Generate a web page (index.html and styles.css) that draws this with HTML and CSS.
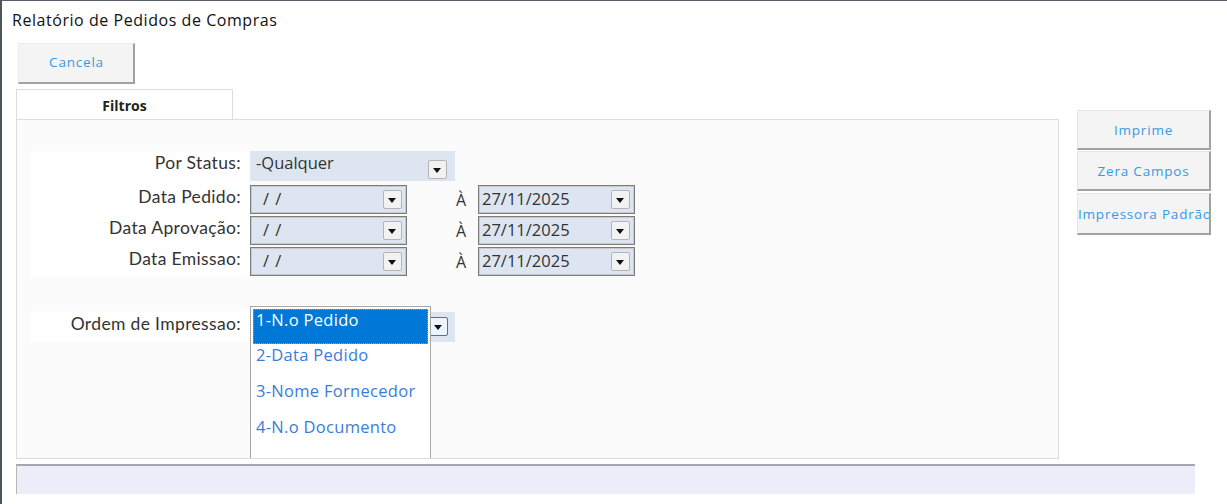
FILE: index.html
```html
<!DOCTYPE html>
<html lang="pt">
  <head>
    <meta charset="UTF-8" />
    <title>Relatório de Pedidos de Compras</title>
    <link rel="stylesheet" href="styles.css">
  </head>
  <body>
    <div class="window">
      <div class="title">Relatório de Pedidos de Compras</div>

      <div class="toolbar">
        <button class="btn btn-cancel">Cancela</button>
      </div>

      <div class="main">
        <div class="left">
          <div class="tabs">
            <div class="tab">Filtros</div>
          </div>

          <div class="panel">
            <div class="filters">
              <div class="row row-status">
                <div class="label">Por Status:</div>
                <div class="combo combo-wide">
                  <span class="combo-text">-Qualquer</span>
                  <span class="drop"></span>
                </div>
              </div>

              <div class="row">
                <div class="label">Data Pedido:</div>
                <div class="combo combo-date">
                  <span class="combo-text slashes">/ /</span>
                  <span class="drop"></span>
                </div>
                <div class="until">À</div>
                <div class="combo combo-date">
                  <span class="combo-text">27/11/2025</span>
                  <span class="drop"></span>
                </div>
              </div>

              <div class="row">
                <div class="label">Data Aprovação:</div>
                <div class="combo combo-date">
                  <span class="combo-text slashes">/ /</span>
                  <span class="drop"></span>
                </div>
                <div class="until">À</div>
                <div class="combo combo-date">
                  <span class="combo-text">27/11/2025</span>
                  <span class="drop"></span>
                </div>
              </div>

              <div class="row">
                <div class="label">Data Emissao:</div>
                <div class="combo combo-date">
                  <span class="combo-text slashes">/ /</span>
                  <span class="drop"></span>
                </div>
                <div class="until">À</div>
                <div class="combo combo-date">
                  <span class="combo-text">27/11/2025</span>
                  <span class="drop"></span>
                </div>
              </div>

              <div class="row row-order">
                <div class="label">Ordem de Impressao:</div>
                <div class="combo combo-wide combo-open">
                  <span class="drop drop-focus"></span>
                  <ul class="listbox">
                    <li class="selected">1-N.o Pedido</li>
                    <li>2-Data Pedido</li>
                    <li>3-Nome Fornecedor</li>
                    <li>4-N.o Documento</li>
                  </ul>
                </div>
              </div>
            </div>
          </div>
        </div>

        <div class="side">
          <button class="btn btn-side">Imprime</button>
          <button class="btn btn-side">Zera Campos</button>
          <button class="btn btn-side btn-tall">Impressora Padrão</button>
        </div>
      </div>

      <div class="statusbar"></div>
    </div>
  </body>
</html>
```

FILE: styles.css
```css
body {
  margin: 0;
  background-color: #fff;
  font-family: "Open Sans", "Noto Sans", sans-serif;
}

.window {
  height: 503px;
  border-top: 1px solid #59606a;
  border-left: 2px solid #50555c;
  overflow: hidden;
}

.title {
  height: 42px;
  padding-left: 10px;
  font-size: 16px;
  letter-spacing: 0.55px;
  line-height: 38px;
  color: #111;
}

.toolbar {
  padding-left: 16px;
  height: 46px;
}

.btn {
  font-family: "Open Sans", sans-serif;
  font-size: 13.5px;
  letter-spacing: 0.8px;
  color: #3799e6;
  background-color: #f4f4f4;
  border: none;
  border-right: 2px solid #a2a2a2;
  border-bottom: 2px solid #a2a2a2;
  padding: 0;
  cursor: pointer;
}

.btn-cancel {
  width: 117px;
  height: 41px;
  padding-left: 1px;
  padding-bottom: 2px;
  border-left: 1px solid #ececec;
  border-top: 1px solid #ececec;
}

.main {
  display: flex;
  gap: 18px;
  padding-left: 14px;
}

.left {
  flex: none;
  width: 1043px;
}

.tabs {
  display: flex;
}

.tab {
  width: 215px;
  height: 29px;
  border: 1px solid #dcdcdc;
  border-bottom: none;
  text-align: center;
  font-weight: bold;
  font-size: 14px;
  line-height: 31px;
  color: #222;
}

.panel {
  height: 338px;
  border: 1px solid #dcdcdc;
  background-color: #fbfbfb;
  overflow: hidden;
}

.filters {
  padding: 31px 0 0 13px;
}

.row {
  display: flex;
  align-items: center;
  height: 31px;
}

.row-status {
  height: 33px;
  align-items: flex-start;
}

.row-order {
  margin-top: 34px;
}

.label {
  width: 211px;
  height: 100%;
  padding-right: 9px;
  background-color: #fff;
  text-align: right;
  font-family: Lato, "Open Sans", sans-serif;
  font-size: 17.5px;
  line-height: 26px;
  letter-spacing: 0.35px;
  color: #333;
}

.row-status .label {
  line-height: 24px;
}

.combo {
  position: relative;
  display: flex;
  align-items: center;
  box-sizing: border-box;
  background-color: #dde6f0;
  font-size: 16.5px;
  color: #333;
}

.combo-wide {
  width: 205px;
  height: 30px;
  padding: 0 8px 0 6px;
}

.combo-wide .combo-text {
  align-self: flex-start;
  line-height: 24px;
}

.combo-wide .drop {
  margin-top: 6px;
}

.combo-date {
  width: 157px;
  height: 29px;
  border: 1px solid #7c7c7c;
  box-shadow: inset 0 0 0 1px #c9c9c9;
  padding: 0 4px 0 3px;
}

.combo-date .combo-text {
  line-height: 26px;
  align-self: flex-start;
}

.combo-text {
  flex: 1;
  white-space: nowrap;
}

.slashes {
  padding-left: 9px;
  word-spacing: 2px;
}

.until {
  width: 71px;
  text-align: right;
  padding-right: 12px;
  box-sizing: border-box;
  font-size: 16px;
  color: #333;
}

.drop {
  position: relative;
  width: 19px;
  height: 19px;
  box-sizing: border-box;
  border: 1px solid #b4b4b4;
  border-radius: 2px;
  background-color: #f2f2f2;
}

.drop::after {
  content: "";
  position: absolute;
  left: 4px;
  top: 7px;
  border-left: 4.5px solid transparent;
  border-right: 4.5px solid transparent;
  border-top: 5px solid #111;
}

.combo-open {
  justify-content: flex-end;
  padding-right: 7px;
}

.combo-open .drop {
  margin-top: 0;
}

.drop-focus {
  border-color: #2c7ad6;
  background-color: #eef4fb;
}

.listbox {
  position: absolute;
  left: 0;
  top: -6px;
  width: 181px;
  height: 160px;
  margin: 0;
  padding: 2px 2px 0;
  box-sizing: border-box;
  list-style: none;
  background-color: #fff;
  border: 1px solid #a7a7a7;
  border-bottom: none;
}

.listbox li {
  height: 36px;
  padding-left: 3px;
  font-size: 16.5px;
  letter-spacing: 0.3px;
  line-height: 20px;
  color: #3a7dd8;
}

.listbox li.selected {
  height: 35px;
  margin-bottom: 1px;
  padding-left: 2px;
  background-color: #0078d7;
  color: #fff;
  border: 1px dotted #7aa9d8;
  box-sizing: border-box;
}

.side {
  flex: none;
  width: 134px;
  display: flex;
  flex-direction: column;
  margin-top: 21px;
}

.btn-side {
  width: 134px;
  height: 40px;
  margin-bottom: 1px;
  border-left: 1px solid #e6e6e6;
  border-top: 1px solid #e6e6e6;
  white-space: nowrap;
  overflow: hidden;
  text-align: center;
  color: #3799e6;
}

.btn-tall {
  height: 42px;
  margin-top: 1px;
  text-align: left;
  padding-left: 0;
}

.statusbar {
  width: 1178px;
  height: 28px;
  margin: 5px 0 0 14px;
  background-color: #ecedf9;
  border-top: 2px solid #a5a8b0;
  border-left: 1px solid #b6b6b6;
}
```
